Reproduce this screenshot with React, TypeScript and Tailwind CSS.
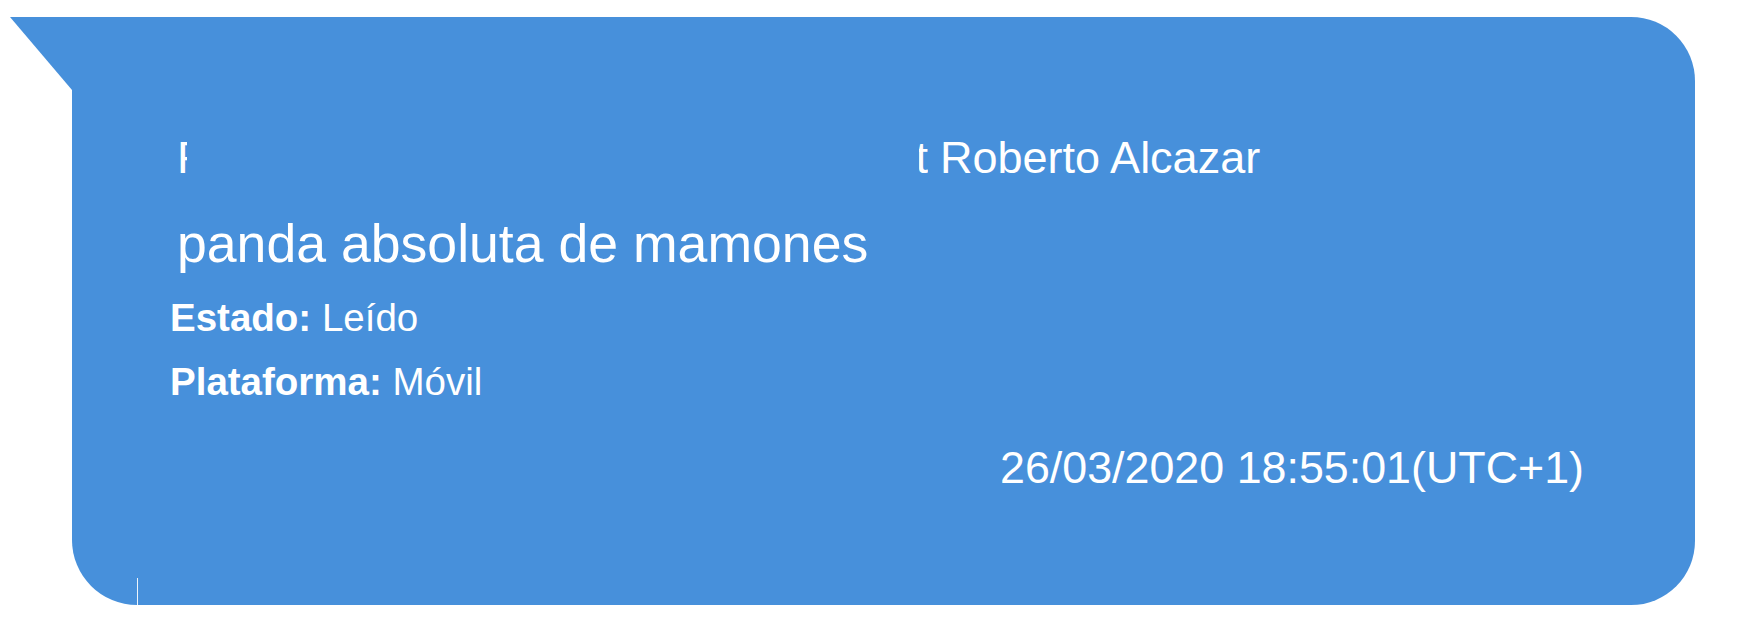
import React from "react";

const BLUE = "#4790db";

export default function App() {
  return (
    <div
      className="w-[1739px] h-[623px] bg-white overflow-hidden"
      style={{ fontFamily: '"Liberation Sans", Arial, sans-serif' }}
    >
      <div className="relative ml-[72px] mt-[17px] w-[1623px] h-[588px] bg-[#4790db] rounded-tr-[64px] rounded-br-[64px] rounded-bl-[65px] text-white">
        {/* tail */}
        <svg
          className="absolute left-[-62px] top-0"
          width="64"
          height="74"
          viewBox="0 0 64 74"
        >
          <polygon points="0,0 64,0 64,74 62,73" fill={BLUE} />
        </svg>
        {/* seam near the bottom-left corner */}
        <div className="absolute left-[65px] bottom-0 w-px h-[27px] bg-white/90" />

        <div className="flex flex-col pt-[116px] pl-[98px]">
          {/* first line, partly hidden */}
          <div className="flex items-start ml-[7px] text-[45px] leading-[50px] whitespace-nowrap">
            <span className="inline-block w-[10px] overflow-hidden">R</span>
            <span className="inline-block ml-[732px] w-[9px] overflow-hidden">
              <span className="flex justify-end">t</span>
            </span>
            <span className="ml-[12px]">Roberto Alcazar</span>
          </div>

          <div className="ml-[7px] mt-[30px] text-[53.6px] leading-[61px] whitespace-nowrap">
            panda absoluta de mamones
          </div>

          <div className="mt-[12px] text-[38.5px] leading-[64px] whitespace-nowrap">
            <span className="font-bold">Estado:</span> Leído
          </div>
          <div className="text-[38.5px] leading-[64px] whitespace-nowrap">
            <span className="font-bold">Plataforma:</span> Móvil
          </div>

          <div className="mt-[28px] pr-[111px] text-right text-[44.8px] leading-[50px] whitespace-nowrap">
            26/03/2020 18:55:01(UTC+1)
          </div>
        </div>
      </div>
    </div>
  );
}
